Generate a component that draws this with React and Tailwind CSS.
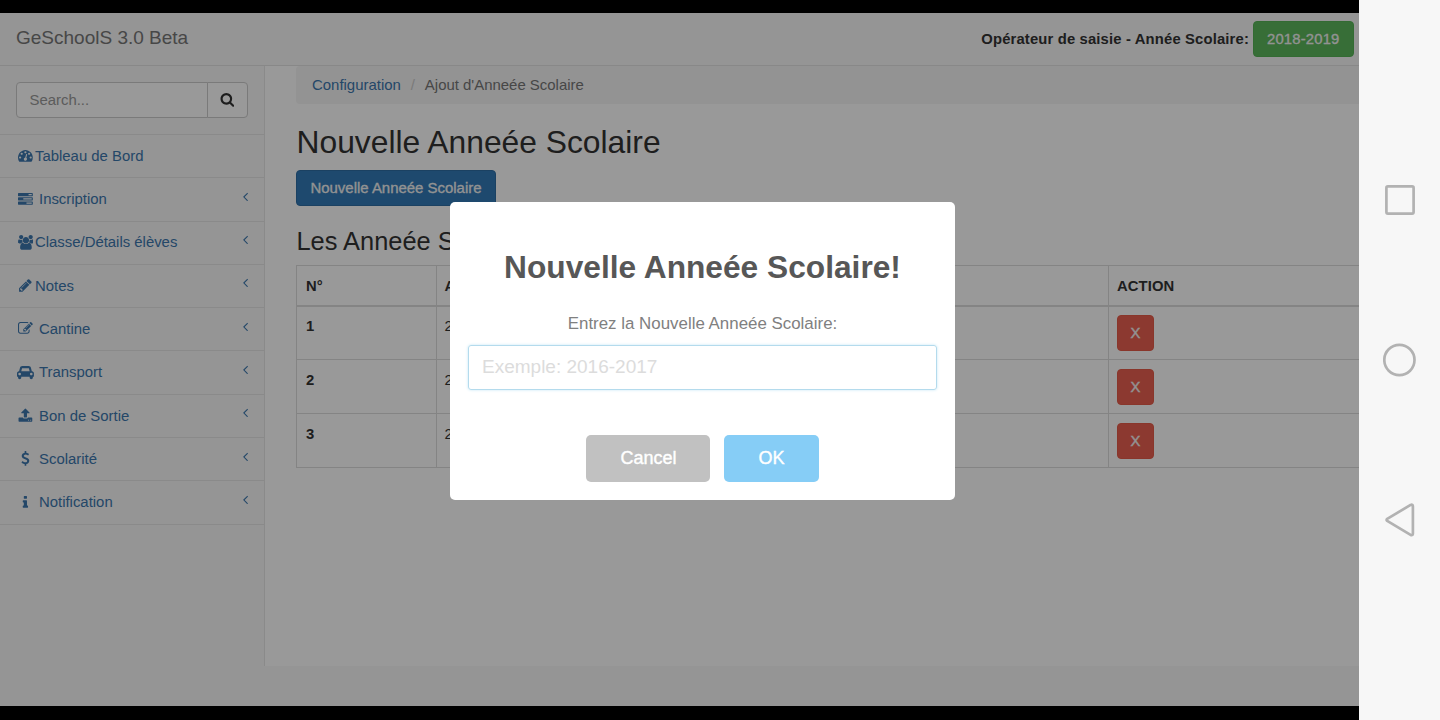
import React from 'react';

const ICONS = {
  dashboard: [1792, 'M384 1152q0-53-37.5-90.5t-90.5-37.5-90.5 37.5-37.5 90.5 37.5 90.5 90.5 37.5 90.5-37.5 37.5-90.5zm192-448q0-53-37.5-90.5t-90.5-37.5-90.5 37.5-37.5 90.5 37.5 90.5 90.5 37.5 90.5-37.5 37.5-90.5zm428 481l101-382q6-26-7.5-48.5t-38.5-29.5-48 6.5-30 39.5l-101 382q-60 5-107 43.5t-63 98.5q-20 77 20 146t117 89 146-20 89-117q16-60-6-117t-72-91zm660-33q0-53-37.5-90.5t-90.5-37.5-90.5 37.5-37.5 90.5 37.5 90.5 90.5 37.5 90.5-37.5 37.5-90.5zm-640-640q0-53-37.5-90.5t-90.5-37.5-90.5 37.5-37.5 90.5 37.5 90.5 90.5 37.5 90.5-37.5 37.5-90.5zm448 192q0-53-37.5-90.5t-90.5-37.5-90.5 37.5-37.5 90.5 37.5 90.5 90.5 37.5 90.5-37.5 37.5-90.5zm320 448q0 261-141 483-19 29-54 29h-1402q-35 0-54-29-141-221-141-483 0-182 71-348t191-286 286-191 348-71 348 71 286 191 191 286 71 348z'],
  tasks: [1792, 'M1024 1408h640v-128h-640v128zm-384-512h1024v-128h-1024v128zm640-512h384v-128h-384v128zm512 832v256q0 26-19 45t-45 19h-1664q-26 0-45-19t-19-45v-256q0-26 19-45t45-19h1664q26 0 45 19t19 45zm0-512v256q0 26-19 45t-45 19h-1664q-26 0-45-19t-19-45v-256q0-26 19-45t45-19h1664q26 0 45 19t19 45zm0-512v256q0 26-19 45t-45 19h-1664q-26 0-45-19t-19-45v-256q0-26 19-45t45-19h1664q26 0 45 19t19 45z'],
  users: [1920, 'M593 896q-162 5-265 128h-134q-82 0-138-40.5t-56-118.5q0-353 124-353 6 0 43.5 21t97.5 42.5 119 21.5q67 0 133-23-5 37-5 66 0 139 81 256zm1071 637q0 120-73 189.5t-194 69.5h-874q-121 0-194-69.5t-73-189.5q0-53 3.5-103.5t14-109 26.5-108.5 43-97.5 62-81 85.5-53.5 111.5-20q10 0 43 21.5t73 48 107 48 135 21.5 135-21.5 107-48 73-48 43-21.5q61 0 111.5 20t85.5 53.5 62 81 43 97.5 26.5 108.5 14 109 3.5 103.5zm-1024-1277q0 106-75 181t-181 75-181-75-75-181 75-181 181-75 181 75 75 181zm704 384q0 159-112.5 271.5t-271.5 112.5-271.5-112.5-112.5-271.5 112.5-271.5 271.5-112.5 271.5 112.5 112.5 271.5zm576 225q0 78-56 118.5t-138 40.5h-134q-103-123-265-128 81-117 81-256 0-29-5-66 66 23 133 23 59 0 119-21.5t97.5-42.5 43.5-21q124 0 124 353zm-128-609q0 106-75 181t-181 75-181-75-75-181 75-181 181-75 181 75 75 181z'],
  pencil: [1792, 'M491 1536l91-91-235-235-91 91v107h128v128h107zm523-928q0-22-22-22-10 0-17 7l-542 542q-7 7-7 17 0 22 22 22 10 0 17-7l542-542q7-7 7-17zm-54-192l416 416-832 832h-416v-416zm683 96q0 53-37 90l-166 166-416-416 166-165q36-38 90-38 53 0 91 38l235 234q37 39 37 91z'],
  edit: [1792, 'M888 1184l116-116-152-152-116 116v56h96v96h56zm440-720q-16-16-33 1l-350 350q-17 17-1 33t33-1l350-350q17-17 1-33zm80 594v190q0 119-84.5 203.5t-203.5 84.5h-832q-119 0-203.5-84.5t-84.5-203.5v-832q0-119 84.5-203.5t203.5-84.5h832q63 0 117 25 15 7 18 23 3 17-9 29l-49 49q-14 14-32 8-23-6-45-6h-832q-66 0-113 47t-47 113v832q0 66 47 113t113 47h832q66 0 113-47t47-113v-126q0-13 9-22l64-64q15-15 35-7t20 29zm-96-738l288 288-672 672h-288v-288zm444 132l-92 92-288-288 92-92q28-28 68-28t68 28l152 152q28 28 28 68t-28 68z'],
  car: [2048, 'M480 1088q0-66-47-113t-113-47-113 47-47 113 47 113 113 47 113-47 47-113zm36-320h1016l-89-357q-2-8-14-17.5t-21-9.5h-768q-9 0-21 9.5t-14 17.5zm1372 320q0-66-47-113t-113-47-113 47-47 113 47 113 113 47 113-47 47-113zm160-96v384q0 14-9 23t-23 9h-96v128q0 80-56 136t-136 56-136-56-56-136v-128h-1024v128q0 80-56 136t-136 56-136-56-56-136v-128h-96q-14 0-23-9t-9-23v-384q0-93 65.5-158.5t158.5-65.5h28l105-419q23-94 104-157.5t179-63.5h768q98 0 179 63.5t104 157.5l105 419h28q93 0 158.5 65.5t65.5 158.5z'],
  upload: [1792, 'M1344 1472q0-26-19-45t-45-19-45 19-19 45 19 45 45 19 45-19 19-45zm256 0q0-26-19-45t-45-19-45 19-19 45 19 45 45 19 45-19 19-45zm128-224v320q0 40-28 68t-68 28h-1472q-40 0-68-28t-28-68v-320q0-40 28-68t68-28h427q21 56 70.5 92t110.5 36h256q61 0 110.5-36t70.5-92h427q40 0 68 28t28 68zm-325-648q-17 40-59 40h-256v448q0 26-19 45t-45 19h-256q-26 0-45-19t-19-45v-448h-256q-42 0-59-40-17-39 14-69l448-448q18-19 45-19t45 19l448 448q31 30 14 69z'],
  usd: [1792, 'M1362 1185q0 153-99.5 263.5t-258.5 136.5v175q0 14-9 23t-23 9h-135q-13 0-22.5-9.5t-9.5-22.5v-175q-66-9-127.5-31t-101.5-44.5-74-48-46.5-37.5-17.5-18q-17-21-2-41l103-135q7-10 23-12 15-2 24 9l2 2q113 99 243 125 37 8 74 8 81 0 142.5-43t61.5-122q0-28-15-53t-33.5-42-58.5-37.5-66-32-80-32.5q-39-16-61.5-25t-61.5-26.5-62.5-31-56.5-35.5-53.5-42.5-43.5-49-35.5-58-21-66.5-8.5-78q0-138 98-242t255-134v-180q0-13 9.5-22.5t22.5-9.5h135q14 0 23 9t9 23v176q57 6 110.5 23t87 33.5 63.5 37.5 39 29 15 14q17 18 5 38l-81 146q-8 15-23 16-14 3-27-7-3-3-14.5-12t-39-26.5-58.5-32-74.5-26-85.5-11.5q-95 0-155 43t-60 111q0 26 8.5 48t29.5 41.5 39.5 33 56 31 60.5 27 70 27.5q53 20 81 31.5t76 35 75.5 42.5 62 50 53 63.5 31.5 76.5 13 94z'],
  info: [1792, 'M1216 1344v128q0 26-19 45t-45 19h-512q-26 0-45-19t-19-45v-128q0-26 19-45t45-19h64v-384h-64q-26 0-45-19t-19-45v-128q0-26 19-45t45-19h384q26 0 45 19t19 45v576h64q26 0 45 19t19 45zm-128-1152v192q0 26-19 45t-45 19h-256q-26 0-45-19t-19-45v-192q0-26 19-45t45-19h256q26 0 45 19t19 45z'],
  search: [1792, 'M1216 832q0-185-131.5-316.5t-316.5-131.5-316.5 131.5-131.5 316.5 131.5 316.5 316.5 131.5 316.5-131.5 131.5-316.5zm512 832q0 52-38 90t-90 38q-54 0-90-38l-343-342q-179 124-399 124-143 0-273.5-55.5t-225-150-150-225-55.5-273.5 55.5-273.5 150-225 225-150 273.5-55.5 273.5 55.5 225 150 150 225 55.5 273.5q0 220-124 399l343 343q37 37 37 90z'],
  angleLeft: [1792, 'M1203 544q0 13-10 23l-393 393 393 393q10 10 10 23t-10 23l-50 50q-10 10-23 10t-23-10l-466-466q-10-10-10-23t10-23l466-466q10-10 23-10t23 10l50 50q10 10 10 23z'],
};

function Icon({ name, className = '' }) {
  const [width, d] = ICONS[name];
  return (
    <svg viewBox={`0 0 ${width} 1792`} className={`h-[14.8px] w-auto fill-current ${className}`}>
      <path d={d} />
    </svg>
  );
}

const MENU = [
  { icon: 'dashboard', label: 'Tableau de Bord', tight: true, leaf: true },
  { icon: 'tasks', label: 'Inscription' },
  { icon: 'users', label: 'Classe/Détails élèves', tight: true },
  { icon: 'pencil', label: 'Notes', tight: true },
  { icon: 'edit', label: 'Cantine' },
  { icon: 'car', label: 'Transport' },
  { icon: 'upload', label: 'Bon de Sortie' },
  { icon: 'usd', label: 'Scolarité' },
  { icon: 'info', label: 'Notification' },
];

const ROWS = [
  { id: 1, year: '2016' },
  { id: 2, year: '2017' },
  { id: 3, year: '2018' },
];

function Header() {
  return (
    <header className="flex h-[53px] shrink-0 items-start justify-between border-b border-[#e3e3e3] bg-[#f8f8f8] pl-4 pr-[5.5px]">
      <span className="pt-[11px] text-[19px] leading-7 text-[#777]">GeSchoolS 3.0 Beta</span>
      <div className="flex items-start gap-1 pt-2">
        <b className="pt-2 text-[14.8px] leading-5 tracking-[0.16px]">Opérateur de saisie - Année Scolaire:</b>
        <button className="h-9 w-[100.5px] rounded-[4px] border border-[#55b355] bg-[#5cb85c] text-[14.8px] tracking-[0.2px] text-[#f4f4f4] [-webkit-text-stroke:0.3px_#f4f4f4]">
          2018-2019
        </button>
      </div>
    </header>
  );
}

function Sidebar() {
  return (
    <nav className="w-[264px] shrink-0 text-[14.9px] text-[#3c77ae]">
      <div className="flex h-[68px] pl-[15.5px] pt-4">
        <div className="flex h-9 w-[192px] items-center rounded-l-[4px] border border-[#ccc] bg-white pl-[13px] text-[#999]">
          Search...
        </div>
        <div className="-ml-px flex h-9 w-[41px] items-center justify-center rounded-r-[4px] border border-[#ccc] bg-white text-[#333]">
          <Icon name="search" className="mb-px" />
        </div>
      </div>
      <ul className="border-t border-[#e7e7e7]">
        {MENU.map((item) => (
          <li key={item.label} className="flex h-[43.3px] items-center border-b border-[#e7e7e7] pb-[0.5px] pl-[16px] pr-4">
            <span className="mb-[0.5px] flex w-[19px] shrink-0 justify-center">
              <Icon name={item.icon} />
            </span>
            <span className={item.tight ? '' : 'pl-1'}>{item.label}</span>
            {!item.leaf && <Icon name="angleLeft" className="-mr-[5px] mb-[6px] ml-auto" />}
          </li>
        ))}
      </ul>
    </nav>
  );
}

function YearTable() {
  return (
    <table className="w-[1095px] table-fixed border-collapse text-left text-[14.8px] leading-5">
      <colgroup>
        <col className="w-[139.5px]" />
        <col className="w-[672.5px]" />
        <col />
      </colgroup>
      <thead>
        <tr className="h-10">
          <th className="border border-b-2 border-[#ddd] px-[9px] pt-px">N°</th>
          <th className="border border-b-2 border-[#ddd] px-2 pt-px">ANNEE</th>
          <th className="border border-b-2 border-[#ddd] px-2 pt-px tracking-[0.1px]">ACTION</th>
        </tr>
      </thead>
      <tbody>
        {ROWS.map((row) => (
          <tr key={row.id} className="h-[54px] align-top">
            <th className="border border-[#ddd] px-[9px] pt-[9.5px]">{row.id}</th>
            <td className="border border-[#ddd] px-2 pt-[9.5px]">{row.year}</td>
            <td className="border border-[#ddd] px-2 pt-[8.5px]">
              <button className="block h-9 w-[37px] rounded-[4px] border border-[#e55b48] bg-[#ea6050] text-[#f4f4f4] [-webkit-text-stroke:0.4px_#f4f4f4]">
                X
              </button>
            </td>
          </tr>
        ))}
      </tbody>
    </table>
  );
}

function Content() {
  return (
    <main className="h-[600px] min-w-0 flex-1 overflow-hidden border-l border-[#e7e7e7] bg-white pl-[31px]">
      <div className="flex h-[38px] w-[1095px] items-center rounded-[4px] bg-[#f5f5f5] pl-4 text-[14.95px]">
        <span className="text-[#3c77ae]">Configuration</span>
        <span className="w-[24px] text-center text-[#ccc]">/</span>
        <span className="text-[#777]">Ajout d'Anneée Scolaire</span>
      </div>
      <h1 className="mt-[21px] pl-[0.5px] text-[31.8px] leading-[35px]">Nouvelle Anneée Scolaire</h1>
      <button className="mt-[10px] block h-9 w-[200px] rounded-[4px] border border-[#2e6da4] bg-[#337ab7] text-[14.95px] text-[#f4f4f4] [-webkit-text-stroke:0.3px_#f4f4f4]">
        Nouvelle Anneée Scolaire
      </button>
      <h2 className="mt-[21px] pl-[0.5px] text-[25.4px] leading-7">Les Anneée Scolaires</h2>
      <div className="mt-[10px]">
        <YearTable />
      </div>
    </main>
  );
}

function Modal() {
  return (
    <div className="absolute inset-0 bg-black/40">
      <div className="absolute left-[450px] top-[189px] flex h-[298px] w-[505px] flex-col items-center rounded-[5px] bg-white px-[18px]">
        <h2 className="mt-[44px] text-[31.7px] font-bold leading-[42px] text-[#575757]">Nouvelle Anneée Scolaire!</h2>
        <p className="mt-[25px] text-[16.9px] leading-[22px] text-[#808080]">Entrez la Nouvelle Anneée Scolaire:</p>
        <div className="mt-[10px] flex h-[45px] w-full items-center rounded-[3px] border border-[#b4dbed] pl-[13px] text-[19px] text-[#dcdcdc] shadow-[0_0_3px_#c4e6f5]">
          Exemple: 2016-2017
        </div>
        <div className="mt-[45px] flex gap-[14px] text-[18px] text-white [-webkit-text-stroke:0.4px_white]">
          <button className="h-[47px] w-[124px] rounded-[5px] bg-[#c1c1c1] pl-px">Cancel</button>
          <button className="h-[47px] w-[95px] rounded-[5px] bg-[#86cdf6]">OK</button>
        </div>
      </div>
    </div>
  );
}

function DeviceNav() {
  return (
    <aside className="flex w-[81px] shrink-0 flex-col items-center justify-center gap-[126px] bg-[#f7f7f7] text-[#b2b2b2]">
      <svg className="size-[34px]" viewBox="0 0 34 34" fill="none" stroke="currentColor" strokeWidth="2.7">
        <rect x="3.4" y="3.4" width="27.2" height="27.2" rx="1.5" />
      </svg>
      <svg className="size-[34px]" viewBox="0 0 34 34" fill="none" stroke="currentColor" strokeWidth="2.7">
        <circle cx="16.4" cy="17" r="15.1" />
      </svg>
      <svg className="size-[34px]" viewBox="0 0 34 34" fill="none" stroke="currentColor" strokeWidth="2.7" strokeLinejoin="round">
        <path d="M4.2 15.9Q2.9 16.9 4.2 17.9L27.6 31.9Q29.9 32.8 29.9 30.4V3.5Q29.9 1 27.6 1.9Z" />
      </svg>
    </aside>
  );
}

export default function App() {
  return (
    <div className="flex h-[720px] w-[1440px] overflow-hidden bg-black font-['Liberation_Sans',Arial,sans-serif] text-[#333]">
      <div className="relative mb-[14px] mt-[13px] flex w-[1359px] shrink-0 flex-col overflow-hidden bg-[#f8f8f8]">
        <Header />
        <div className="flex">
          <Sidebar />
          <Content />
        </div>
        <Modal />
      </div>
      <DeviceNav />
    </div>
  );
}
